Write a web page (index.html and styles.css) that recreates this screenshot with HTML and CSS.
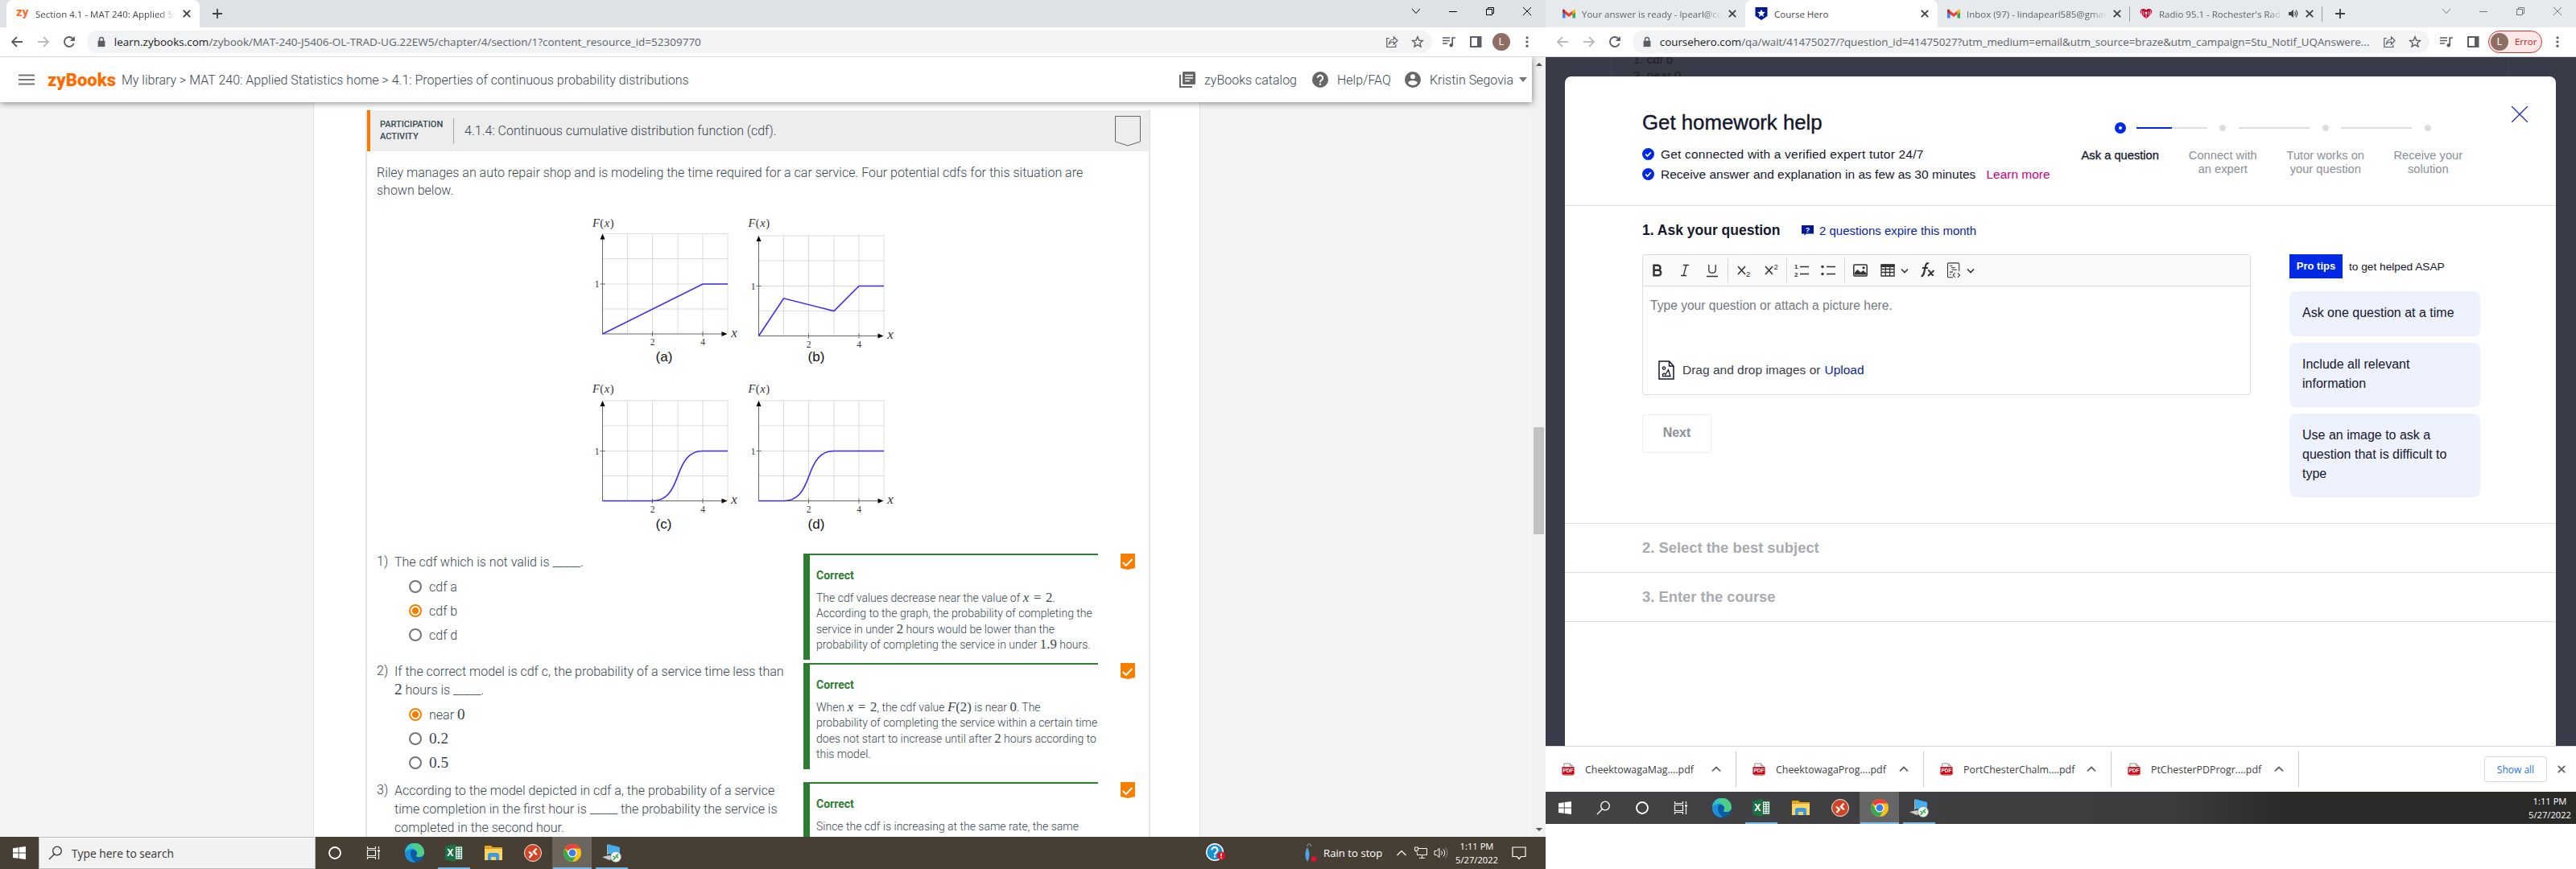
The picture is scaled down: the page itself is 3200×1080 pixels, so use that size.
FILE: index.html
```
<!DOCTYPE html>
<html lang="en">
<head>
  <meta charset="UTF-8" />
  <title>Section 4.1 - MAT 240: Applied Statistics</title>
  <link rel="stylesheet" href="styles.css">
</head>
<body>
  <!-- Shared icons -->
  <svg class="sprite" width="0" height="0">
    <symbol id="i-back" viewBox="0 0 16 16"><path d="M15 8H2M8 2L2 8l6 6" fill="none" stroke="currentColor" stroke-width="1.8"/></symbol>
    <symbol id="i-fwd" viewBox="0 0 16 16"><path d="M1 8h13M8 2l6 6-6 6" fill="none" stroke="currentColor" stroke-width="1.8"/></symbol>
    <symbol id="i-reload" viewBox="0 0 16 16"><path d="M13.6 10A6 6 0 1 1 12.3 3.8L14 5.5" fill="none" stroke="currentColor" stroke-width="1.9"/><path d="M14.8 1v6h-6z" fill="currentColor"/></symbol>
    <symbol id="i-lock" viewBox="0 0 16 16"><path d="M3 6.500h10V15H3z" fill="currentColor"/><path d="M5.200 7V4.500a2.800 2.800 0 0 1 5.600 0V7" fill="none" stroke="currentColor" stroke-width="1.6"/></symbol>
    <symbol id="i-share" viewBox="0 0 16 16"><path d="M5 3.500H1.800v11h11V11.500M4.500 10.500C5 6.500 7 5 10.500 5V2L15 6.500 10.500 11V8C8 8 6 8.500 4.500 10.500z" fill="none" stroke="currentColor" stroke-width="1.2"/></symbol>
    <symbol id="i-star" viewBox="0 0 16 16"><path d="M8 1.800l1.800 4.300 4.600.4-3.500 3 1.100 4.600L8 11.600 4 14.100l1.100-4.600-3.500-3 4.600-.4z" fill="none" stroke="currentColor" stroke-width="1.4"/></symbol>
    <symbol id="i-music" viewBox="0 0 16 16"><path d="M0 3h9M0 6.500h9M0 10h6M12.200 12V3H16" fill="none" stroke="currentColor" stroke-width="1.7"/><circle cx="10.700" cy="12.300" r="2.200" fill="currentColor"/></symbol>
    <symbol id="i-panel" viewBox="0 0 16 16"><path d="M2 2h12.500v12H2z" fill="none" stroke="currentColor" stroke-width="2"/><path d="M10 2h5v12h-5z" fill="currentColor"/></symbol>
    <symbol id="i-dots" viewBox="0 0 16 16"><g fill="currentColor"><circle cx="8" cy="2.800" r="1.600"/><circle cx="8" cy="8" r="1.600"/><circle cx="8" cy="13.200" r="1.600"/></g></symbol>
    <symbol id="i-x" viewBox="0 0 10 10"><path d="M1.500 1.500l7 7M8.500 1.500l-7 7" stroke="currentColor" stroke-width="1.5"/></symbol>
    <symbol id="i-plus" viewBox="0 0 12 12"><path d="M6 0v12M0 6h12" stroke="currentColor" stroke-width="1.8"/></symbol>
    <symbol id="i-vee" viewBox="0 0 10 10"><path d="M0 2l5 5.500L10 2" fill="none" stroke="currentColor"/></symbol>
    <symbol id="i-up" viewBox="0 0 10 10"><path d="M.8 7L5 3l4.200 4" fill="none" stroke="currentColor" stroke-width="1.5"/></symbol>
    <symbol id="i-down" viewBox="0 0 10 10"><path d="M1 3.500l4 4 4-4" fill="none" stroke="currentColor" stroke-width="1.6"/></symbol>
    <symbol id="i-min" viewBox="0 0 10 10"><path d="M0 5.500h10" stroke="currentColor"/></symbol>
    <symbol id="i-restore" viewBox="0 0 10 10"><path d="M.5 2.500h7v7h-7zM2.500 2.500v-2h7v7h-2" fill="none" stroke="currentColor"/></symbol>
    <symbol id="i-close" viewBox="0 0 10 10"><path d="M0 0l10 10M10 0L0 10" stroke="currentColor"/></symbol>
    <symbol id="i-gmail" viewBox="0 0 16 16"><path d="M0 4v9.500h3.600V6z" fill="#4285f4"/><path d="M16 4v9.500h-3.600V6z" fill="#34a853"/><path d="M12.400 4.500L14 2.800c1-.6 2 0 2 1.200v2l-3.600 2.700z" fill="#fbbc04"/><path d="M3.600 4.500L8 7.800l4.400-3.300v4.200L8 12 3.600 8.700z" fill="#ea4335"/><path d="M3.600 4.500L2 2.800C1 2.200 0 2.800 0 4v2l3.600 2.700z" fill="#c5221f"/></symbol>
    <symbol id="i-tick" viewBox="0 0 18 20"><path d="M0 0h18v18l-9 2-9-2z" fill="#f77f00"/><path d="M2.800 11l4 4L14.500 7" fill="none" stroke="#fff" stroke-width="1.9"/></symbol>
    <symbol id="i-round-check" viewBox="0 0 16 16"><circle cx="8" cy="8" r="8" fill="#0029e6"/><path d="M4.500 8.200l2.400 2.500 4.600-5" fill="none" stroke="#fff" stroke-width="1.8"/></symbol>
    <symbol id="i-pdf" viewBox="0 0 16 18"><path d="M2.500 1h8l3 3v12.500h-11z" fill="#fff" stroke="#8a8a8a"/><path d="M10.500 1v3h3" fill="none" stroke="#8a8a8a"/><path d="M0 5.500h16v10H0z" fill="#d6000f"/><text x="8" y="13.200" text-anchor="middle" font-family="Liberation Sans" font-size="7" font-weight="700" fill="#fff">PDF</text></symbol>

    <!-- Taskbar icons -->
    <symbol id="t-win" viewBox="0 0 16 16"><path d="M0 2.200l6.800-1v6.300H0zM7.700 1L16 0v7.500H7.700zM0 8.400h6.800v6.400L0 13.900zM7.700 8.400H16V16l-8.300-1.100z" fill="#fff"/></symbol>
    <symbol id="t-search" viewBox="0 0 18 18"><circle cx="11" cy="6.500" r="5.300" fill="none" stroke="currentColor" stroke-width="1.3"/><path d="M7.500 10.500L1 17" stroke="currentColor" stroke-width="1.3"/></symbol>
    <symbol id="t-cortana" viewBox="0 0 18 18"><circle cx="9" cy="9" r="7" fill="none" stroke="#fff" stroke-width="1.8"/></symbol>
    <symbol id="t-view" viewBox="0 0 18 18"><path d="M1.500 1v2.500h10V1M1.500 17v-2.500h10V17M1.500 5.500h10v7h-10zM15.500 1v3M15.500 8.500V17" fill="none" stroke="#fff" stroke-width="1.2"/><path d="M14.200 5h2.600v2.800h-2.600z" fill="#fff"/></symbol>
    <symbol id="t-edge" viewBox="0 0 24 24"><circle cx="12" cy="12" r="12" fill="#0c59a4"/><path d="M0 12A12 12 0 0 1 24 11c0 4-3 6-6.500 6-3 0-4-1-3-2.200C17 11.500 13 7.500 9 7.500c-4 0-7.500 1.500-9 4.500z" fill="#35c1c9"/><path d="M11 0a12 12 0 0 1 13 11c0 4-3 6-6.500 6-3 0-4-1-3-2.200C17 11 15 6 8 5z" fill="#5bd85f" opacity=".65"/><path d="M0 12c1-3 5-5 9-4.500-3 3-3 11 4 15.500-2 1-4 1-6 0A12 12 0 0 1 0 12z" fill="#1b8fd8"/></symbol>
    <symbol id="t-excel" viewBox="0 0 22 22"><path d="M12 3h9.500v16H12z" fill="#fff" stroke="#1e7145"/><path d="M14 5.500h6M14 8.200h6M14 11h6M14 13.800h6M14 16.500h6" stroke="#1e7145" stroke-width="1.5"/><path d="M17 4v14" stroke="#fff"/><path d="M0 2.500L13 0v22L0 19.500z" fill="#1e7145"/><text x="6.300" y="15.300" text-anchor="middle" font-family="Liberation Sans" font-size="12" font-weight="700" fill="#fff">X</text></symbol>
    <symbol id="t-folder" viewBox="0 0 22 20"><path d="M0 1h8l2 2h12v16H0z" fill="#e8a317"/><path d="M0 5h22v14H0z" fill="#fcd462"/><path d="M4 19v-7.500L6 10h10l2 1.500V19h-4v-4H8v4z" fill="#3f9ae0"/></symbol>
    <symbol id="t-rdp" viewBox="0 0 22 22"><circle cx="11" cy="11" r="10.500" fill="#d14424" stroke="#eee"/><path d="M6 9.500l4 3.300L6.500 17M15.500 5.500L11.800 9.700l4 3.500" fill="none" stroke="#fff" stroke-width="2.2"/></symbol>
    <symbol id="t-chrome" viewBox="0 0 22 22"><circle cx="11" cy="11" r="11" fill="#fbc116"/><path d="M11 11L1.500 5.500A11 11 0 0 1 20.500 5.500H11z" fill="#ea4335"/><path d="M1.500 5.500A11 11 0 0 0 11 22l5-8.500-5-2.500-5 2z" fill="#34a853"/><circle cx="11" cy="11" r="5.600" fill="#fff"/><circle cx="11" cy="11" r="4.400" fill="#3b7ded"/></symbol>
    <symbol id="t-remote" viewBox="0 0 24 24"><path d="M7 1l15 4v11L8 13z" fill="#43aef0"/><path d="M7 1l1 12-2 2V3z" fill="#9bb"/><path d="M0 17l9-2 7 3-7 3z" fill="#c9cdd1"/><circle cx="17" cy="17" r="6.500" fill="#eef5ee" stroke="#888" stroke-width=".7"/><path d="M13.500 16l2.700 2-2.500 2.700M20 13.500l-2.700 2.500 2.700 2.200" fill="none" stroke="#22a83a" stroke-width="1.5"/></symbol>
  </svg>

  <!-- Left monitor -->
  <div class="monitor monitor-left">
    <div class="window">
      <div class="tab-strip">
        <div class="tab active">
          <b class="favicon-zy">zy</b>
          <span class="tab-title fade">Section 4.1 - MAT 240: Applied St</span>
          <svg class="tab-x"><use href="#i-x"/></svg>
        </div>
        <svg class="new-tab"><use href="#i-plus"/></svg>
        <div class="win-controls">
          <svg><use href="#i-vee"/></svg><svg><use href="#i-min"/></svg><svg><use href="#i-restore"/></svg><svg><use href="#i-close"/></svg>
        </div>
      </div>
      <div class="toolbar">
        <svg class="tool"><use href="#i-back"/></svg>
        <svg class="tool off"><use href="#i-fwd"/></svg>
        <svg class="tool"><use href="#i-reload"/></svg>
        <div class="omnibox">
          <svg class="lock"><use href="#i-lock"/></svg>
          <span class="url"><span class="host">learn.zybooks.com</span>/zybook/MAT-240-J5406-OL-TRAD-UG.22EW5/chapter/4/section/1?content_resource_id=52309770</span>
          <svg class="tool"><use href="#i-share"/></svg>
          <svg class="tool"><use href="#i-star"/></svg>
        </div>
        <svg class="tool"><use href="#i-music"/></svg>
        <svg class="tool"><use href="#i-panel"/></svg>
        <span class="avatar">L</span>
        <svg class="tool"><use href="#i-dots"/></svg>
      </div>

      <div class="page zy">
        <div class="zy-main">
          <header class="zy-header">
            <svg class="burger" viewBox="0 0 20 14"><path d="M0 1.500h20M0 7h20M0 12.500h20" stroke="#757575" stroke-width="2.2"/></svg>
            <b class="zy-logo">zyBooks</b>
            <nav class="crumbs">My library &gt; MAT 240: Applied Statistics home &gt; 4.1: Properties of continuous probability distributions</nav>
            <div class="zy-links">
              <svg viewBox="0 0 20 20"><path d="M1 4v15h15" fill="none" stroke="#666" stroke-width="2"/><rect x="4" y="0" width="16" height="16" rx="1.500" fill="#666"/><path d="M7 4.500h10M7 8h10M7 11.500h6" stroke="#fff" stroke-width="1.7"/></svg>
              <span class="catalog">zyBooks catalog</span>
              <svg viewBox="0 0 20 20"><circle cx="10" cy="10" r="10" fill="#666"/><path d="M6.800 7.800a3.200 3.200 0 1 1 4.800 2.800C10.500 11.300 10 11.800 10 13.200M10 14.500v2.200" fill="none" stroke="#fff" stroke-width="2"/></svg>
              <span class="faq">Help/FAQ</span>
              <svg viewBox="0 0 20 20"><circle cx="10" cy="10" r="10" fill="#666"/><circle cx="10" cy="6.200" r="3" fill="#fff"/><path d="M4 14c1-4 11-4 12 0-2.500 4-9.500 4-12 0z" fill="#fff"/></svg>
              <span class="user">Kristin Segovia</span>
              <i class="caret"></i>
            </div>
          </header>
          <div class="sheet">
            <section class="activity">
              <div class="activity-head">
                <span class="kind">PARTICIPATION<br>ACTIVITY</span>
                <h2>4.1.4: Continuous cumulative distribution function (cdf).</h2>
                <svg class="bookmark" viewBox="0 0 32 38"><path d="M.5.500h31v31.500L16 37 .5 32z" fill="none" stroke="#666"/></svg>
              </div>
              <p class="intro">Riley manages an auto repair shop and is modeling the time required for a car service. Four potential cdfs for this situation are<br>shown below.</p>

              <svg class="charts" viewBox="722 262 440 404">
                <defs>
                  <g id="axes">
                    <path d="M31-125V0M62-125V0M93.500-125V0M124.500-125V0M155.500-125V0M0-124.500H156M0-93.500H156M0-62H156M0-31H156" fill="none" stroke="#dcdcdc"/>
                    <path d="M0 0V-118M0 0H150M62-3V3M124.500-3V3M-3-62H3" fill="none" stroke="#666"/>
                    <path d="M0-124.500l3 7h-6zM155 0l-7 3v-6z" fill="#000"/>
                    <text class="num" x="-7" y="-58">1</text>
                    <text class="num" x="62" y="14">2</text>
                    <text class="num" x="124.500" y="14">4</text>
                    <text class="var" x="163.500" y="3.500">x</text>
                  </g>
                </defs>
                <g transform="translate(748.500 415)"><use href="#axes"/><path class="curve" d="M0 0L124.500-62H155.500"/></g>
                <g transform="translate(942.500 417.500)"><use href="#axes"/><path class="curve" d="M0 0L31-46.700 93.500-31 124.500-62H155.500"/></g>
                <g transform="translate(748.500 622.500)"><use href="#axes"/><path class="curve" d="M0 0H62C80 0 87-13 93.500-31S107-62 124.500-62H155.500"/></g>
                <g transform="translate(942.500 622.500)"><use href="#axes"/><path class="curve" d="M0 0H31C49 0 56-13 62.500-31S76-62 93.500-62H155.500"/></g>
                <text class="fx" x="749.500" y="281.500"><tspan font-style="italic">F</tspan>(<tspan font-style="italic">x</tspan>)</text>
                <text class="fx" x="943" y="281.500"><tspan font-style="italic">F</tspan>(<tspan font-style="italic">x</tspan>)</text>
                <text class="fx" x="749.500" y="487.500"><tspan font-style="italic">F</tspan>(<tspan font-style="italic">x</tspan>)</text>
                <text class="fx" x="943" y="487.500"><tspan font-style="italic">F</tspan>(<tspan font-style="italic">x</tspan>)</text>
                <text class="tag" x="825" y="449">(a)</text>
                <text class="tag" x="1014" y="449">(b)</text>
                <text class="tag" x="824.500" y="657">(c)</text>
                <text class="tag" x="1014" y="657">(d)</text>
              </svg>

              <div class="question q1">
                <span class="q-num">1)</span>
                <div class="q-body">
                  <p>The cdf which is not valid is _____.</p>
                  <ul>
                    <li>cdf a</li>
                    <li class="picked">cdf b</li>
                    <li>cdf d</li>
                  </ul>
                </div>
                <div class="explain">
                  <h3>Correct</h3>
                  <p>The cdf values decrease near the value of <var>x</var><em> = 2</em>.<br>According to the graph, the probability of completing the<br>service in under <em>2</em> hours would be lower than the<br>probability of completing the service in under <em>1.9</em> hours.</p>
                </div>
                <svg class="tick"><use href="#i-tick"/></svg>
              </div>

              <div class="question q2">
                <span class="q-num">2)</span>
                <div class="q-body">
                  <p>If the correct model is cdf c, the probability of a service time less than<br><em>2</em> hours is _____.</p>
                  <ul>
                    <li class="picked">near <em>0</em></li>
                    <li><em>0.2</em></li>
                    <li><em>0.5</em></li>
                  </ul>
                </div>
                <div class="explain">
                  <h3>Correct</h3>
                  <p>When <var>x</var><em> = 2</em>, the cdf value <var>F</var><em>(2)</em> is near <em>0</em>. The<br>probability of completing the service within a certain time<br>does not start to increase until after <em>2</em> hours according to<br>this model.</p>
                </div>
                <svg class="tick"><use href="#i-tick"/></svg>
              </div>

              <div class="question q3">
                <span class="q-num">3)</span>
                <div class="q-body">
                  <p>According to the model depicted in cdf a, the probability of a service<br>time completion in the first hour is _____ the probability the service is<br>completed in the second hour.</p>
                </div>
                <div class="explain">
                  <h3>Correct</h3>
                  <p>Since the cdf is increasing at the same rate, the same</p>
                </div>
                <svg class="tick"><use href="#i-tick"/></svg>
              </div>
            </section>
          </div>
        </div>
        <div class="scrollbar"><i class="arrow-up"></i><i class="thumb"></i><i class="arrow-down"></i></div>
      </div>
    </div>

    <div class="taskbar brown">
      <span class="task"><svg class="s16"><use href="#t-win"/></svg></span>
      <div class="search"><svg><use href="#t-search"/></svg><span>Type here to search</span></div>
      <span class="task"><svg class="s18"><use href="#t-cortana"/></svg></span>
      <span class="task"><svg class="s18"><use href="#t-view"/></svg></span>
      <div class="apps">
        <span class="app"><svg><use href="#t-edge"/></svg></span>
        <span class="app open"><svg><use href="#t-excel"/></svg></span>
        <span class="app"><svg><use href="#t-folder"/></svg></span>
        <span class="app"><svg><use href="#t-rdp"/></svg></span>
        <span class="app open current"><svg><use href="#t-chrome"/></svg></span>
        <span class="app open"><svg><use href="#t-remote"/></svg></span>
      </div>
      <div class="tray">
        <svg class="help" viewBox="0 0 24 24"><circle cx="11" cy="11" r="10.300" fill="#1793d1" stroke="#fff" stroke-width="1.5"/><path d="M7.500 8.500a3.500 3.500 0 1 1 5.500 2.700c-1.300 1-2 1.500-2 3M11 15.500v2.300" fill="none" stroke="#fff" stroke-width="2.2"/><circle cx="19" cy="15.500" r="5" fill="#e81123"/><path d="M19 12.500v3.700M19 17.200v1.600" stroke="#fff" stroke-width="1.5"/></svg>
        <svg class="rain" viewBox="0 0 18 24"><path d="M6 4C6 0 11 0 10.500 4" fill="none" stroke="#777" stroke-width="1.5"/><path d="M6 5c-3 5-3 10-1.500 15l1.500 3 1.500-3C9 15 9 10 6 5z" fill="#4ba3e8"/><circle cx="14" cy="19.500" r="3.300" fill="#e8112d"/></svg>
        <span class="weather">Rain to stop</span>
        <svg class="chev" viewBox="0 0 12 12"><path d="M.5 9L6 3.500 11.500 9" fill="none" stroke="#fff" stroke-width="1.2"/></svg>
        <svg class="net" viewBox="0 0 18 16"><path d="M5.500 2.500h11v8h-12V7M10.500 10.500v3.500M7 14.300h7M1.500 1h4v4h-4zM3 5v2" fill="none" stroke="#fff"/></svg>
        <svg class="vol" viewBox="0 0 18 16"><path d="M1 5.500h2.500L7 2.500v11l-3.500-3H1zM9.500 5.500q2 2.500 0 5M12 3.500q3.500 4.500 0 9" fill="none" stroke="#fff"/><path d="M14.500 1.500q5 6.500 0 13" fill="none" stroke="#888"/></svg>
        <div class="clock"><span>1:11 PM</span><span>5/27/2022</span></div>
        <svg class="notif" viewBox="0 0 18 18"><path d="M1 2h16v11.500h-5.500L9 16.500l-2.500-3H1z" fill="none" stroke="#fff" stroke-width="1.2"/></svg>
      </div>
    </div>
  </div>

  <!-- Right monitor -->
  <div class="monitor monitor-right">
    <div class="window">
      <div class="tab-strip">
        <div class="tab">
          <svg class="favicon"><use href="#i-gmail"/></svg>
          <span class="tab-title fade">Your answer is ready - lpearl@co</span>
          <svg class="tab-x"><use href="#i-x"/></svg>
        </div>
        <div class="tab active">
          <svg class="favicon" viewBox="0 0 16 16"><path d="M.5 0h15v11L8 16 .5 11z" fill="#001a96"/><path d="M8 2.500l1.400 3.300 3.500.3-2.700 2.300.9 3.500L8 10l-3.100 1.900.9-3.500-2.700-2.300 3.500-.3z" fill="#fff"/></svg>
          <span class="tab-title">Course Hero</span>
          <svg class="tab-x"><use href="#i-x"/></svg>
        </div>
        <div class="tab ruled">
          <svg class="favicon"><use href="#i-gmail"/></svg>
          <span class="tab-title fade">Inbox (97) - lindapearl585@gmai</span>
          <svg class="tab-x"><use href="#i-x"/></svg>
        </div>
        <div class="tab ruled">
          <svg class="favicon" viewBox="0 0 16 16"><path d="M8 14.500L1.500 8C-1 4.500 3-.500 8 3.500 13-.500 17 4.500 14.500 8z" fill="#c6002b"/><path d="M8 7v8M5.200 5.200q-1.800 2 0 4.500M10.800 5.200q1.800 2 0 4.500M3 4q-2 3 0 6M13 4q2 3 0 6" fill="none" stroke="#f3dfe3" stroke-width=".9"/><circle cx="8" cy="7" r="1.500" fill="#fff"/></svg>
          <span class="tab-title fade short">Radio 95.1 - Rochester's Rad</span>
          <svg class="audio" viewBox="0 0 12 12"><path d="M0 4h2.500L6 1v10L2.500 8H0z" fill="#444"/><path d="M7.500 3.500q2 2.500 0 5M9 1.500q3.500 4.500 0 9" fill="none" stroke="#444" stroke-width="1.2"/></svg>
          <svg class="tab-x"><use href="#i-x"/></svg>
        </div>
        <svg class="new-tab"><use href="#i-plus"/></svg>
        <div class="win-controls">
          <svg><use href="#i-vee"/></svg><svg><use href="#i-min"/></svg><svg><use href="#i-restore"/></svg><svg><use href="#i-close"/></svg>
        </div>
      </div>
      <div class="toolbar">
        <svg class="tool off"><use href="#i-back"/></svg>
        <svg class="tool off"><use href="#i-fwd"/></svg>
        <svg class="tool"><use href="#i-reload"/></svg>
        <div class="omnibox">
          <svg class="lock"><use href="#i-lock"/></svg>
          <span class="url"><span class="host">coursehero.com</span>/qa/wait/41475027/?question_id=41475027?utm_medium=email&amp;utm_source=braze&amp;utm_campaign=Stu_Notif_UQAnswere...</span>
          <svg class="tool"><use href="#i-share"/></svg>
          <svg class="tool"><use href="#i-star"/></svg>
        </div>
        <svg class="tool"><use href="#i-music"/></svg>
        <svg class="tool"><use href="#i-panel"/></svg>
        <span class="error-pill"><span class="avatar">L</span>Error</span>
        <svg class="tool"><use href="#i-dots"/></svg>
      </div>

      <div class="page hero">
        <div class="behind"><p>1. cdf b</p><p>3. near 0</p></div>
        <main class="modal">
          <header class="modal-head">
            <div class="pitch">
              <h1>Get homework help</h1>
              <p><svg><use href="#i-round-check"/></svg><span class="line1">Get connected with a verified expert tutor 24/7</span></p>
              <p><svg><use href="#i-round-check"/></svg><span class="line2">Receive answer and explanation in as few as 30 minutes</span><a>Learn more</a></p>
            </div>
            <div class="steps">
              <div class="track">
                <i class="dot on"></i><i class="bar half"></i><i class="dot"></i><i class="bar"></i><i class="dot"></i><i class="bar"></i><i class="dot"></i>
              </div>
              <div class="labels">
                <span class="on">Ask a question</span>
                <span>Connect with<br>an expert</span>
                <span>Tutor works on<br>your question</span>
                <span>Receive your<br>solution</span>
              </div>
            </div>
            <svg class="dismiss" viewBox="0 0 20 20"><path d="M0 0l20 20M20 0L0 20" stroke="#1b2fa8" stroke-width="1.3"/></svg>
          </header>

          <section class="ask">
            <div class="ask-main">
              <div class="ask-title">
                <h2>1. Ask your question</h2>
                <svg viewBox="0 0 15 13"><path d="M0 0h15v10.500H5.500L3.500 13V10.500H0z" fill="#001a96"/><text x="7.500" y="8.800" text-anchor="middle" font-family="Liberation Sans" font-size="9" font-weight="700" fill="#fff">?</text></svg>
                <span class="expire">2 questions expire this month</span>
              </div>
              <div class="editor">
                <div class="editor-bar">
                  <div class="group g1">
                    <svg viewBox="0 0 20 20"><path d="M5.500 3.800h5a3 3 0 0 1 0 6h-5zM5.500 9.800h5.500a3.200 3.200 0 0 1 0 6.400H5.500z" fill="none" stroke="#333" stroke-width="2.5"/></svg>
                    <svg viewBox="0 0 20 20"><path d="M8 3.500h7M5 16.500h7M11.800 3.500l-3.500 13" fill="none" stroke="#333" stroke-width="1.3"/></svg>
                    <svg viewBox="0 0 20 20"><path d="M5.800 3v6.500c0 5 8.400 5 8.400 0V3M3 17.500h14" fill="none" stroke="#333" stroke-width="1.3"/></svg>
                  </div>
                  <div class="group g2">
                    <svg viewBox="0 0 20 20"><path d="M2 5l9 10M11 5L2 15" stroke="#333" stroke-width="1.6"/><text x="12" y="18" font-family="Liberation Sans" font-size="9.500" fill="#333">2</text></svg>
                    <svg viewBox="0 0 20 20"><path d="M2 5l9 10M11 5L2 15" stroke="#333" stroke-width="1.6"/><text x="12.500" y="8.500" font-family="Liberation Sans" font-size="9.500" fill="#333">2</text></svg>
                  </div>
                  <div class="group g3">
                    <svg viewBox="0 0 20 20"><path d="M8 5.500h11M8 14.500h11" stroke="#333" stroke-width="1.5"/><text x="1" y="8" font-family="Liberation Sans" font-size="8" font-weight="700" fill="#333">1</text><text x="1" y="17.500" font-family="Liberation Sans" font-size="8" font-weight="700" fill="#333">2</text></svg>
                    <svg viewBox="0 0 20 20"><path d="M8 5.500h11M8 14.500h11" stroke="#333" stroke-width="1.5"/><circle cx="3" cy="5.500" r="1.700" fill="#333"/><circle cx="3" cy="14.500" r="1.700" fill="#333"/></svg>
                  </div>
                  <div class="group g4">
                    <svg viewBox="0 0 20 20"><rect x="1.800" y="3" width="16.400" height="14" rx="1.200" fill="none" stroke="#333" stroke-width="1.5"/><path d="M3 15.500v-3l3.500-3.500 4 3.500 3-2.500 4 3.500v2z" fill="#333"/><circle cx="14" cy="6.800" r="1.600" fill="#333"/></svg>
                    <svg viewBox="0 0 20 20"><path d="M2 3h16v14H2zM2 8.500h16M2 12.500h16M7.300 6v11M12.600 6v11" fill="none" stroke="#333" stroke-width="1.3"/><path d="M1.500 2.500h17V6h-17z" fill="#333"/></svg>
                    <svg class="drop"><use href="#i-down"/></svg>
                    <svg class="formula" viewBox="0 0 20 20"><path d="M12 1.500C8.500 0 8 4 7 9s-1.500 8-4.500 8.500M4 7h7" fill="none" stroke="#333" stroke-width="2.2"/><path d="M11 10c3-1 3 7 7 6M18.500 10L11 17" fill="none" stroke="#333" stroke-width="2"/></svg>
                    <svg class="snippet" viewBox="0 0 20 24"><path d="M9 22.500H2.500Q1 22.500 1 21V2.500Q1 1 2.500 1h14Q18 1 18 2.500V13M4 5h4M6 8h6M7 11h8M4 14.500h5M4 18h2M12 16l-3 3.200 3 3.200M16 16l3 3.200-3 3.200" fill="none" stroke="#333" stroke-width="1.3"/></svg>
                    <svg class="drop"><use href="#i-down"/></svg>
                  </div>
                </div>
                <p class="placeholder">Type your question or attach a picture here.</p>
                <div class="dropzone">
                  <svg viewBox="0 0 20 24"><path d="M1 1h12.500L19 7v16H1zM13.500 1v6H19" fill="none" stroke="#15172c" stroke-width="1.5"/><circle cx="7" cy="9.500" r="1.700" fill="none" stroke="#15172c" stroke-width="1.3"/><path d="M5.500 19.500v-2.500l2-1 1.500 1.500 3.500-6 2.500 8z" fill="none" stroke="#15172c" stroke-width="1.3"/></svg>
                  <span class="drag">Drag and drop images or</span><a>Upload</a>
                </div>
              </div>
              <button class="next">Next</button>
            </div>
            <aside class="tips">
              <div class="tips-head"><b>Pro tips</b><span>to get helped ASAP</span></div>
              <p>Ask one question at a time</p>
              <p>Include all relevant<br>information</p>
              <p>Use an image to ask a<br>question that is difficult to<br>type</p>
            </aside>
          </section>
          <h2 class="later">2. Select the best subject</h2>
          <h2 class="later">3. Enter the course</h2>
        </main>
      </div>

      <div class="downloads">
        <div class="file"><svg class="pdf"><use href="#i-pdf"/></svg><span>CheektowagaMag....pdf</span><svg class="up"><use href="#i-up"/></svg></div>
        <div class="file"><svg class="pdf"><use href="#i-pdf"/></svg><span>CheektowagaProg....pdf</span><svg class="up"><use href="#i-up"/></svg></div>
        <div class="file"><svg class="pdf"><use href="#i-pdf"/></svg><span>PortChesterChalm....pdf</span><svg class="up"><use href="#i-up"/></svg></div>
        <div class="file"><svg class="pdf"><use href="#i-pdf"/></svg><span>PtChesterPDProgr....pdf</span><svg class="up"><use href="#i-up"/></svg></div>
        <button class="show-all">Show all</button>
        <svg class="shut"><use href="#i-x"/></svg>
      </div>
    </div>

    <div class="taskbar dark">
      <span class="task"><svg class="s16"><use href="#t-win"/></svg></span>
      <span class="task"><svg class="s18"><use href="#t-search"/></svg></span>
      <span class="task"><svg class="s18"><use href="#t-cortana"/></svg></span>
      <span class="task"><svg class="s18"><use href="#t-view"/></svg></span>
      <div class="apps">
        <span class="app"><svg><use href="#t-edge"/></svg></span>
        <span class="app open"><svg><use href="#t-excel"/></svg></span>
        <span class="app"><svg><use href="#t-folder"/></svg></span>
        <span class="app"><svg><use href="#t-rdp"/></svg></span>
        <span class="app open current"><svg><use href="#t-chrome"/></svg></span>
        <span class="app open"><svg><use href="#t-remote"/></svg></span>
      </div>
      <div class="tray"><div class="clock"><span>1:11 PM</span><span>5/27/2022</span></div></div>
    </div>
  </div>
</body>
</html>
```
FILE: styles.css
```
*,
*::before {
  box-sizing: border-box;
}

body {
  margin: 0;
  width: 3200px;
  height: 1080px;
  display: flex;
  overflow: hidden;
  background: #fff;
  font-family: 'Open Sans', sans-serif;
}

h1, h2, h3, p, ul {
  margin: 0;
  padding: 0;
}

svg {
  flex: none;
  display: block;
}

.sprite {
  position: absolute;
}

.monitor {
  display: flex;
  flex-direction: column;
}

.monitor-left {
  width: 1920px;
}

.monitor-right {
  width: 1280px;
}

.window {
  display: flex;
  flex-direction: column;
  height: 1040px;
  overflow: hidden;
}

.monitor-right .window {
  height: 984px;
}

/* Browser frame */
.tab-strip {
  display: flex;
  height: 34px;
  padding-left: 8px;
  background: #dee1e6;
}

.monitor-right .tab-strip {
  background: #e7eaed;
  padding-left: 9px;
}

.tab {
  display: flex;
  align-items: center;
  width: 240px;
  padding: 0 10px 0 12px;
  font-size: 11.5px;
  color: #5f6368;
}

.monitor-right .tab {
  width: 239px;
}

.tab.active {
  background: #fff;
  border-radius: 8px 8px 0 0;
  color: #45484d;
}

.tab.ruled {
  background: linear-gradient(#9a9da1, #9a9da1) right 8px / 1px 19px no-repeat;
}

.favicon,
.favicon-zy {
  width: 16px;
  height: 16px;
}

.favicon-zy {
  color: #f26a21;
  font: 700 15px/12px Roboto, sans-serif;
}

.tab-title {
  width: 174px;
  margin-left: 8px;
  white-space: nowrap;
  overflow: hidden;
}

.tab-title.short {
  width: 153px;
}

.fade {
  mask-image: linear-gradient(90deg, #000 88%, transparent);
}

.audio {
  width: 12px;
  height: 12px;
  margin-left: 8px;
}

.tab-x {
  width: 12px;
  height: 12px;
  margin-left: auto;
  color: #3c4043;
}

.new-tab {
  width: 12px;
  height: 12px;
  margin: 11px 0 0 16px;
  color: #3c4043;
}

.win-controls {
  display: flex;
  margin-left: auto;
  height: 28px;
  align-items: center;
}

.win-controls svg {
  width: 10px;
  height: 10px;
  margin: 0 18px;
}

.monitor-right .win-controls {
  color: #777;
}

.toolbar {
  display: flex;
  align-items: center;
  height: 37px;
  padding: 0 6px 1px 5px;
  border-bottom: 1px solid #d5d7da;
  background: #fff;
}

.tool {
  width: 16px;
  height: 16px;
  margin: 0 8.3px;
  color: #5a5e63;
}

.tool.off {
  color: #babcbe;
}

.omnibox {
  display: flex;
  align-items: center;
  width: 1671px;
  height: 28px;
  margin: 0 5px;
  padding: 0 1px 0 10px;
  border-radius: 14px;
  background: #f1f3f4;
}

.monitor-right .omnibox {
  width: 990px;
}

.lock {
  width: 16px;
  height: 14px;
  color: #5a5e63;
}

.url {
  flex: 1;
  margin-left: 8px;
  font-size: 13.5px;
  color: #5f6368;
  white-space: nowrap;
}

.monitor-right .url {
  font-size: 13.35px;
}

.host {
  color: #202124;
}

.avatar {
  width: 22px;
  height: 22px;
  margin: 0 5px;
  border-radius: 50%;
  background: #8d6e63;
  color: #fff;
  font: 12px/22px Roboto, sans-serif;
  text-align: center;
}

.error-pill {
  display: flex;
  align-items: center;
  width: 67px;
  height: 28px;
  margin: 0 3px;
  border: 1px solid #d5322a;
  border-radius: 14px;
  background: #fce8e6;
  color: #c5221f;
  font-size: 11.5px;
}

.error-pill .avatar {
  margin: 0 8px 0 2px;
}

/* zyBooks */
.page {
  flex: 1;
  min-height: 0;
  overflow: hidden;
}

.zy {
  display: flex;
  background: #f4f4f4;
  color: #37474f;
  font-family: Roboto, sans-serif;
  font-weight: 300;
}

.zy-main {
  width: 1903px;
}

.zy-header {
  position: relative;
  display: flex;
  align-items: center;
  height: 56px;
  padding-left: 23px;
  background: #fff;
  box-shadow: 0 1px 8px rgba(0, 0, 0, 0.5);
  font-size: 16px;
}

.burger {
  width: 20px;
  height: 14px;
}

.zy-logo {
  width: 84px;
  margin-left: 16px;
  color: #ff6d00;
  font-size: 22px;
  font-weight: 900;
}

.crumbs {
  margin-left: 8px;
  white-space: nowrap;
}

.zy-links {
  display: flex;
  align-items: center;
  margin-left: auto;
  padding-right: 6px;
  white-space: nowrap;
}

.zy-links svg {
  width: 20px;
  height: 20px;
}

.zy-links span {
  margin-left: 11px;
}

.catalog {
  width: 134px;
}

.faq {
  width: 84px;
}

.user {
  width: 104px;
}

.caret {
  margin-left: 7px;
  border: 5px solid transparent;
  border-top: 6px solid #757575;
  border-bottom: 0;
}

.sheet {
  width: 1102px;
  height: 913px;
  margin-left: 389px;
  padding: 10px 61px 0 64px;
  border: 1px solid #e2e2e2;
  border-width: 0 1px;
  background: #fff;
}

.activity {
  height: 960px;
  border: 1px solid #e6e6e6;
  border-width: 0 2px;
}

.activity-head {
  display: flex;
  align-items: center;
  height: 51px;
  padding: 0 10px 0 12px;
  border-left: 4px solid #f57c00;
  background: #ededed;
}

.kind {
  width: 92px;
  padding-bottom: 2px;
  border-right: 1px solid #aaa;
  font-size: 11px;
  font-weight: 500;
  line-height: 15px;
}

.activity-head h2 {
  margin-left: 13px;
  font-size: 16px;
  font-weight: 300;
}

.bookmark {
  width: 32px;
  height: 38px;
  margin-left: auto;
}

.intro {
  padding: 16px 0 0 12px;
  font-size: 16px;
  line-height: 22px;
  white-space: nowrap;
}

.charts {
  width: 440px;
  height: 404px;
  margin: 14px 0 0 266px;
}

.charts text {
  text-anchor: middle;
  font-family: 'Liberation Serif', serif;
  fill: #333;
}

.charts .num {
  font-size: 11.5px;
}

.charts .var {
  font-size: 17px;
  font-style: italic;
}

.charts .fx {
  font-size: 14.5px;
  letter-spacing: 0.5px;
}

.charts .tag {
  font-family: 'Liberation Sans', sans-serif;
  font-size: 17px;
  fill: #111;
}

.curve {
  fill: none;
  stroke: #3b2bf0;
  stroke-width: 1.6;
}

.question {
  display: flex;
  align-items: flex-start;
  height: 136px;
  padding-left: 12px;
  font-size: 16px;
  line-height: 23px;
}

.q1 {
  margin-top: 22px;
}

.q2 {
  height: 148px;
}

.q-num {
  width: 22px;
  margin-top: -2px;
}

.q-body {
  width: 508px;
  margin-top: -1px;
  white-space: nowrap;
}

.q-body ul {
  margin-top: 4px;
  padding-left: 18px;
  list-style: none;
}

.q-body li {
  display: flex;
  align-items: center;
  gap: 4px;
  height: 30px;
}

.q-body li::before {
  content: "";
  width: 16px;
  height: 16px;
  margin-right: 5px;
  border: 2px solid #757575;
  border-radius: 50%;
}

.q-body li.picked::before {
  border-color: #f77f00;
  background: radial-gradient(circle, #f77f00 3.8px, #fff 4.3px);
}

em, var {
  font-family: 'Liberation Serif', serif;
  font-size: 1.2em;
  font-weight: 400;
  line-height: 1;
}

em {
  font-style: normal;
  word-spacing: 1.5px;
}

.explain {
  width: 366px;
  height: 132px;
  padding: 16px 0 0 8px;
  border-left: 8px solid #2e7d32;
  border-top: 2px solid #2e7d32;
  font-size: 14px;
  line-height: 19.6px;
  white-space: nowrap;
}

.explain h3 {
  margin-bottom: 8px;
  color: #2e7d32;
  font-size: 14px;
  font-weight: 700;
}

.tick {
  width: 18px;
  height: 20px;
  margin-left: 28px;
}

.scrollbar {
  display: flex;
  flex-direction: column;
  align-items: center;
  width: 17px;
  background: #f1f1f1;
}

.arrow-up,
.arrow-down {
  border: 4px solid transparent;
}

.arrow-up {
  margin-top: 7px;
  border-top: 0;
  border-bottom-color: #505050;
}

.thumb {
  width: 13px;
  height: 133px;
  margin-top: 449px;
  background: #c1c1c1;
}

.arrow-down {
  margin-top: 365px;
  border-bottom: 0;
  border-top-color: #505050;
}

/* Course Hero */
.hero {
  display: flex;
  flex-direction: column;
  background: #3a3b49;
  font-family: 'Liberation Sans', sans-serif;
  color: #15172c;
}

.behind {
  height: 24px;
  margin: 0 83px 0 81px;
  padding-left: 27px;
  border: 1px solid #414250;
  border-width: 0 1px;
  overflow: hidden;
  color: #1d1d29;
  font-size: 15px;
  line-height: 20px;
}

.behind p:first-child {
  margin-top: -7px;
}

.modal {
  flex: 1;
  margin: 0 25px 0 24px;
  border-radius: 8px 8px 0 0;
  background: #fff;
}

.modal-head {
  display: flex;
  height: 161px;
  padding: 42px 35px 0 96px;
  border-bottom: 1px solid #dadee2;
  white-space: nowrap;
}

.pitch {
  width: 530px;
}

h1 {
  margin-bottom: 12px;
  font-size: 25.8px;
  font-weight: 400;
  line-height: 30px;
  -webkit-text-stroke: 0.4px;
}

.pitch p {
  display: flex;
  align-items: center;
  height: 25px;
  font-size: 15.5px;
}

.pitch .line1 {
  letter-spacing: 0.2px;
}

.pitch .line2 {
  letter-spacing: 0.02px;
}

.pitch svg {
  width: 15px;
  height: 15px;
  margin-right: 8px;
}

.pitch a {
  margin-left: 13px;
  color: #c7007d;
}

.steps {
  width: 510px;
  margin-top: 15px;
}

.track {
  display: flex;
  align-items: center;
  justify-content: space-between;
  height: 14px;
  margin: 0 57px;
}

.dot {
  display: flex;
  width: 14px;
  height: 14px;
  border: 3px solid #fff;
  border-radius: 50%;
  background: #dadee2;
}

.dot.on {
  border: 5px solid #0029e6;
  background: #fff;
}

.bar {
  width: 88px;
  height: 2px;
  background: #dadee2;
}

.bar.half {
  background: linear-gradient(90deg, #0029e6 50%, #dadee2 50%);
}

.labels {
  display: grid;
  grid-template-columns: repeat(4, 1fr);
  margin-top: 19px;
  color: #8b8f96;
  font-size: 14.7px;
  line-height: 17px;
  text-align: center;
}

.labels .on {
  color: #15172c;
  -webkit-text-stroke: 0.3px;
}

.dismiss {
  width: 20px;
  height: 20px;
  margin: -5px 0 0 auto;
}

.ask {
  display: flex;
  height: 395px;
  padding: 18px 95px 0 96px;
  border-bottom: 1px solid #dadee2;
}

.ask-main {
  width: 756px;
  margin-right: 48px;
  flex: none;
}

.ask-title {
  display: flex;
  align-items: center;
  height: 24px;
  margin-bottom: 18px;
  white-space: nowrap;
}

.ask-title h2 {
  width: 198px;
  font-size: 17.5px;
}

.ask-title svg {
  width: 15px;
  height: 13px;
}

.expire {
  margin-left: 7px;
  color: #0a1f9c;
  font-size: 15px;
}

.editor {
  height: 175px;
  border: 1px solid #dadee2;
  border-radius: 3px;
}

.editor-bar {
  display: flex;
  align-items: center;
  height: 39px;
  border-bottom: 1px solid #dadee2;
  background: #fafafa;
}

.group {
  display: flex;
  align-items: center;
  height: 30px;
  border-right: 1px solid #d5d7da;
}

.group svg {
  width: 20px;
  height: 20px;
}

.g1 {
  gap: 14px;
  width: 106px;
  padding-left: 8px;
}

.g2 {
  gap: 14px;
  width: 73px;
  padding-left: 10px;
}

.g3 {
  gap: 13px;
  width: 72px;
  padding-left: 8px;
}

.g4 {
  gap: 14px;
  padding-left: 9px;
  border: 0;
}

.group .drop {
  width: 10px;
  height: 10px;
  margin-left: -8px;
  color: #333;
}

.group .formula {
  margin-left: -1px;
}

.group .snippet {
  margin-left: -1px;
}

.placeholder {
  padding: 15px 9px 0;
  color: #75797f;
  font-size: 15.6px;
  line-height: 17px;
}

.dropzone {
  display: flex;
  align-items: center;
  margin: 60px 0 0 19px;
  color: #3c3e48;
  font-size: 15.5px;
}

.dropzone svg {
  width: 20px;
  height: 24px;
  margin-right: 10px;
}

.dropzone a {
  margin-left: 5px;
  color: #0a1f9c;
}

.next {
  width: 86px;
  height: 48px;
  margin-top: 24px;
  padding-bottom: 3px;
  border: 1px solid #eceef0;
  border-radius: 3px;
  background: #fff;
  color: #8b8f96;
  font: 700 16px 'Liberation Sans', sans-serif;
}

.tips {
  width: 237px;
  flex: none;
  padding-top: 42px;
  white-space: nowrap;
}

.tips-head {
  display: flex;
  align-items: center;
  margin-bottom: 16px;
  font-size: 13.7px;
}

.tips-head b {
  width: 66px;
  margin-right: 8px;
  background: #0029e6;
  color: #fff;
  font-size: 13px;
  line-height: 30px;
  text-align: center;
}

.tips > p {
  margin-bottom: 8px;
  padding: 15px 16px 17px;
  border-radius: 8px;
  background: #eef2ff;
  font-size: 16px;
  line-height: 24px;
}

.later {
  height: 61px;
  padding-left: 96px;
  border-bottom: 1px solid #dadee2;
  color: #a8abaf;
  font-size: 18.4px;
  line-height: 59px;
}

.downloads {
  display: flex;
  align-items: center;
  height: 57px;
  padding-right: 12px;
  border-top: 1px solid #d5d7da;
  background: #fff;
  font-size: 12.4px;
}

.file {
  display: flex;
  align-items: center;
  width: 233px;
  height: 44px;
  padding: 0 18px 0 20px;
  border-right: 1px solid #c9cbce;
  color: #3c4043;
}

.file:first-child {
  width: 237px;
}

.pdf {
  width: 16px;
  height: 17px;
  margin-right: 13px;
}

.up {
  width: 12px;
  height: 12px;
  margin-left: auto;
  color: #5f6368;
}

.show-all {
  width: 78px;
  height: 32px;
  margin-left: auto;
  border: 1px solid #d5d7da;
  border-radius: 4px;
  background: #fff;
  color: #1a73e8;
  font: 12px 'Open Sans', sans-serif;
}

.shut {
  width: 12px;
  height: 12px;
  margin-left: 12px;
  color: #5f6368;
}

/* Windows taskbar */
.taskbar {
  display: flex;
  height: 40px;
  color: #fff;
  font-size: 11.2px;
}

.brown {
  background: #483f34;
}

.dark {
  background: linear-gradient(90deg, #434345, #3d3d3f 60%, #2a2a29 72%);
}

.task {
  display: flex;
  align-items: center;
  justify-content: center;
  width: 48px;
}

.s16 {
  width: 16px;
  height: 16px;
}

.s18 {
  width: 18px;
  height: 18px;
}

.search {
  display: flex;
  align-items: center;
  width: 344px;
  padding-left: 11px;
  border: 1px solid #bbb;
  background: #f2f2f2;
  color: #333;
  font-size: 13.8px;
}

.search svg {
  width: 18px;
  height: 18px;
  margin-right: 11px;
}

.apps {
  display: flex;
  margin-left: 2px;
}

.app {
  display: flex;
  align-items: center;
  justify-content: center;
  width: 49px;
  background: no-repeat center bottom / 40px 2px;
}

.app svg {
  width: 22px;
  height: 22px;
}

.app:first-child svg,
.app:last-child svg {
  width: 24px;
  height: 24px;
}

.app.open {
  background-image: linear-gradient(#76b9ed, #76b9ed);
}

.app.current {
  background-color: rgba(255, 255, 255, 0.2);
  background-size: 48px 2px;
}

.tray {
  display: flex;
  align-items: center;
  margin-left: auto;
  padding-right: 4px;
}

.help {
  width: 24px;
  height: 24px;
  margin-right: 96px;
}

.rain {
  width: 18px;
  height: 24px;
  margin-right: 8px;
}

.weather {
  width: 74px;
  margin-right: 17px;
  font-size: 13.2px;
  white-space: nowrap;
}

.chev {
  width: 12px;
  height: 12px;
  margin-right: 9px;
}

.net {
  width: 18px;
  height: 16px;
  margin-right: 7px;
}

.vol {
  width: 18px;
  height: 16px;
  margin-right: 9px;
}

.clock {
  display: flex;
  flex-direction: column;
  align-items: center;
  line-height: 17px;
}

.notif {
  width: 18px;
  height: 18px;
  margin: 0 20px 0 17px;
}

.dark .tray {
  padding-right: 6px;
}
```
